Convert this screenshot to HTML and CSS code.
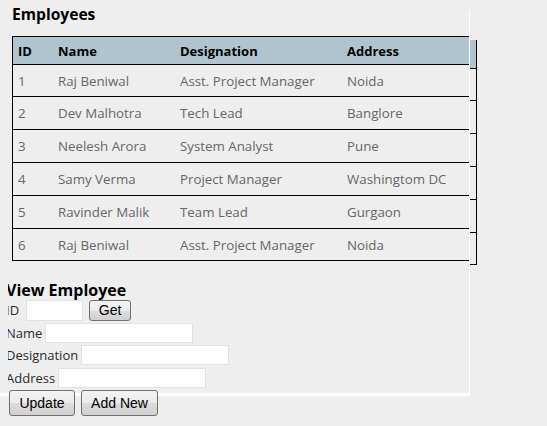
FILE: index.html
```html
<!DOCTYPE html>
<html>
<head>
<meta charset="utf-8">
<title>Employees</title>
<link rel="stylesheet" href="styles.css">
</head>
<body>
<div class="page">
  <h2 class="title">Employees</h2>
  <div class="grid-wrap">
    <div class="emp" role="table">
      <div class="row head" role="row"><span>ID</span><span>Name</span><span>Designation</span><span>Address</span></div>
      <div class="row short" role="row"><span>1</span><span>Raj Beniwal</span><span>Asst. Project Manager</span><span>Noida</span></div>
      <div class="row" role="row"><span>2</span><span>Dev Malhotra</span><span>Tech Lead</span><span>Banglore</span></div>
      <div class="row" role="row"><span>3</span><span>Neelesh Arora</span><span>System Analyst</span><span>Pune</span></div>
      <div class="row" role="row"><span>4</span><span>Samy Verma</span><span>Project Manager</span><span>Washingtom DC</span></div>
      <div class="row" role="row"><span>5</span><span>Ravinder Malik</span><span>Team Lead</span><span>Gurgaon</span></div>
      <div class="row short" role="row"><span>6</span><span>Raj Beniwal</span><span>Asst. Project Manager</span><span>Noida</span></div>
    </div>
    <div class="ghost">
      <div class="g-head"></div>
      <div class="g-row g-short"></div>
      <div class="g-row"></div>
      <div class="g-row"></div>
      <div class="g-row"></div>
      <div class="g-row"></div>
      <div class="g-row g-short"></div>
    </div>
  </div>
  <div class="view">
    <div class="view-in">
      <h3 class="view-title">View Employee</h3>
      <div class="frow"><label class="lbl">ID</label><input class="field field-id" type="text"><button class="btn btn-get">Get</button></div>
      <div class="frow"><label class="lbl">Name</label><input class="field" type="text"></div>
      <div class="frow"><label class="lbl">Designation</label><input class="field" type="text"></div>
      <div class="frow"><label class="lbl">Address</label><input class="field" type="text"></div>
      <div class="brow"><button class="btn btn-update">Update</button><button class="btn btn-add">Add New</button></div>
    </div>
  </div>
</div>
</body>
</html>
```
FILE: styles.css
```css
body {
  margin: 0;
  background: #eeeeee;
  font-family: "Open Sans", "Noto Sans", sans-serif;
}

.page {
  width: 470px;
  padding-bottom: 8px;
  background:
    linear-gradient(#ffffff, #ffffff) no-repeat 469px 10px / 1px 386px,
    linear-gradient(#ffffff, #ffffff) no-repeat 0 393px / 470px 3px;
}

.title {
  margin: 0;
  padding: 4px 0 0 12px;
  height: 36px;
  box-sizing: border-box;
  font-size: 15.6px;
  line-height: 20px;
  font-weight: 700;
  color: #000;
}

.grid-wrap {
  display: flex;
  align-items: flex-start;
  margin-left: 12px;
}

.emp {
  width: 457px;
  flex-shrink: 0;
  box-sizing: border-box;
  border-left: 1px solid #000;
  border-top: 1px solid #000;
}

.row {
  display: grid;
  grid-template-columns: 40px 122px 167px 127px;
  align-items: center;
  height: 33px;
  box-sizing: border-box;
  border-bottom: 1px solid #000;
  font-size: 13.3px;
  color: #666666;
  white-space: nowrap;
}

.row span {
  padding-left: 5px;
  overflow: hidden;
}

.row.short {
  height: 32px;
}

.row.head {
  height: 28px;
  background: #b0c4cf;
  font-size: 13px;
  font-weight: 700;
  color: #000;
}

.ghost {
  width: 6px;
  flex-shrink: 0;
  margin: 4px 0 0 1px;
  border-right: 1px solid #000;
}

.g-head {
  height: 29px;
  box-sizing: border-box;
  background: #b0c4cf;
  border-bottom: 1px solid #000;
}

.g-row {
  height: 33px;
  box-sizing: border-box;
  border-bottom: 1px solid #000;
}

.g-short {
  height: 32px;
}

.view {
  margin: 15px 0 0 8px;
  width: 300px;
  overflow: hidden;
}

.view-in {
  margin-left: -2px;
}

.view-title {
  margin: 0;
  font-size: 16px;
  line-height: 20px;
  font-weight: 700;
  color: #000;
}

.frow {
  display: flex;
  align-items: center;
  height: 20.5px;
  margin-bottom: 2px;
}

.lbl {
  font-size: 13px;
  color: #2a2a2a;
  margin-right: 3px;
}

.field {
  width: 148px;
  height: 20px;
  box-sizing: border-box;
  border: 1px solid #e2e2e2;
  background: #fff;
  margin: 0;
  padding: 0;
}

.field-id {
  width: 57px;
  height: 21px;
  margin-left: 4px;
}

.brow {
  display: flex;
  gap: 6px;
  padding-left: 3px;
}

.btn {
  font-family: "Liberation Sans", Arial, sans-serif;
  font-size: 14px;
  color: #000;
  border: 1px solid #707070;
  border-radius: 3px;
  background: linear-gradient(#f3f3f3 0%, #ebebeb 50%, #dddddd 50%, #d0d0d0 100%);
  padding: 0;
  margin: 0;
}

.btn-get {
  width: 42px;
  height: 21px;
  margin-left: 6px;
}

.btn-update {
  width: 66px;
  height: 26px;
}

.btn-add {
  width: 77px;
  height: 26px;
}
```
